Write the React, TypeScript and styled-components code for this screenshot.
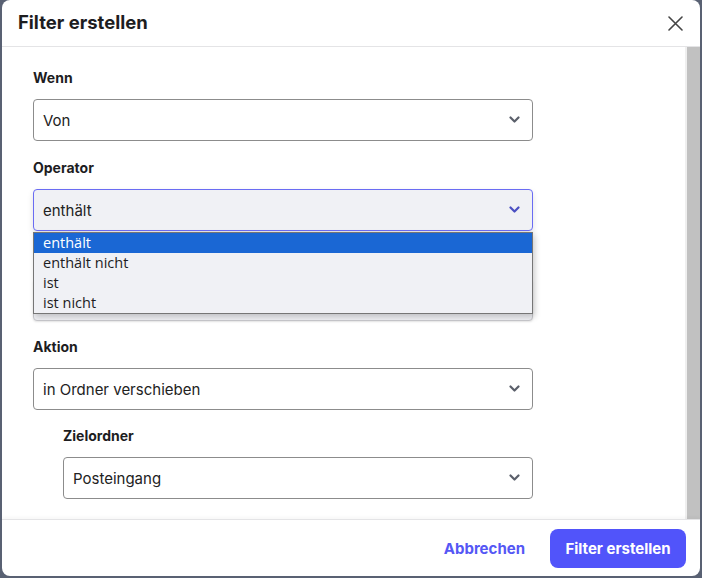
import React from "react";
import styled, { createGlobalStyle } from "styled-components";

const Global = createGlobalStyle`
  html, body { margin: 0; padding: 0; height: 100%; }
  body {
    background: #596173;
    font-family: Inter, "Noto Sans", sans-serif;
    overflow: hidden;
  }
  * { box-sizing: border-box; }
`;

const Page = styled.div`
  width: 702px;
  height: 578px;
  padding: 0 2px 2px 2px;
  display: flex;
`;

const Dialog = styled.div`
  flex: 1;
  background: #fff;
  border-radius: 8px;
  display: flex;
  flex-direction: column;
  overflow: hidden;
`;

const Header = styled.div`
  height: 47px;
  flex: none;
  display: flex;
  align-items: center;
  justify-content: space-between;
  padding: 0 14px 0 16px;
  border-bottom: 1px solid #e4e4e6;
`;

const Title = styled.h2`
  margin: 0 0 2px 0;
  font-size: 18.5px;
  font-weight: 700;
  color: #1d1d1f;
  letter-spacing: 0px;
`;

const CloseButton = styled.button`
  border: none;
  background: none;
  padding: 0;
  width: 22px;
  height: 22px;
  display: flex;
  align-items: center;
  justify-content: center;
  color: #444;
  cursor: pointer;
`;

const BodyRow = styled.div`
  flex: 1;
  display: flex;
  overflow: hidden;
`;

const Content = styled.div`
  flex: 1;
  padding: 21px 0 0 31px;
`;

const ScrollTrack = styled.div`
  width: 15px;
  flex: none;
  background: #efefef;
  padding-left: 2px;
  display: flex;
`;

const ScrollThumb = styled.div`
  flex: 1;
  background: #c1c1c1;
`;

const Field = styled.div<{ $indent?: boolean; $tight?: boolean }>`
  width: ${(p) => (p.$indent ? 470 : 500)}px;
  margin-left: ${(p) => (p.$indent ? 30 : 0)}px;
  margin-bottom: ${(p) => (p.$tight ? 16 : 17)}px;
  position: relative;
  &:last-child { margin-bottom: 0; }
`;

const Label = styled.div`
  font-size: 14px;
  font-weight: 700;
  line-height: 20px;
  height: 20px;
  color: #1d1d1f;
  margin-bottom: 11px;
`;

const SelectBox = styled.div<{ $focused?: boolean }>`
  height: 42px;
  border: 1px solid ${(p) => (p.$focused ? "#6a6cf3" : "#8c8c8c")};
  border-radius: 4px;
  background: ${(p) => (p.$focused ? "#f0f1f5" : "#fff")};
  box-shadow: ${(p) => (p.$focused ? "0 3px 6px rgba(0,0,0,0.12)" : "none")};
  display: flex;
  align-items: center;
  justify-content: space-between;
  padding: 0 12px 0 9px;
  font-size: 15px;
  color: #222;
`;

const InputBox = styled.div`
  height: 42px;
  border: 1px solid #c8c8cc;
  border-radius: 4px;
  background: #f0f1f5;
  box-shadow: 0 1px 2px rgba(0,0,0,0.1);
`;

const Chevron = styled.svg<{ $focused?: boolean }>`
  width: 11px;
  height: 8px;
  color: ${(p) => (p.$focused ? "#4a4fc2" : "#5a5f6a")};
`;

const DropList = styled.ul`
  position: absolute;
  left: 0;
  top: 74px;
  width: 500px;
  margin: 0;
  padding: 0;
  list-style: none;
  background: #f0f1f5;
  border: 1px solid #767676;
  box-shadow: 2px 3px 6px rgba(0,0,0,0.2);
  z-index: 5;
`;

const Option = styled.li<{ $selected?: boolean }>`
  height: 20px;
  line-height: 20px;
  padding-left: 9px;
  font-family: "Open Sans", "Noto Sans", sans-serif;
  font-size: 14.5px;
  color: ${(p) => (p.$selected ? "#fff" : "#1d1d1f")};
  background: ${(p) => (p.$selected ? "#1a67d4" : "transparent")};
`;

const Footer = styled.div`
  height: 57px;
  flex: none;
  border-top: 1px solid #e4e4e6;
  box-shadow: 0 -2px 3px rgba(0,0,0,0.03);
  display: flex;
  align-items: center;
  justify-content: flex-end;
  gap: 9px;
  padding: 0 14px 0 0;
`;

const TextButton = styled.button`
  border: none;
  background: none;
  font-family: Inter, "Noto Sans", sans-serif;
  font-size: 15px;
  font-weight: 700;
  color: #5557f5;
  padding: 0 16px;
  height: 39px;
  cursor: pointer;
`;

const PrimaryButton = styled.button`
  border: none;
  background: #5154fa;
  color: #fff;
  font-family: Inter, "Noto Sans", sans-serif;
  font-size: 15px;
  font-weight: 700;
  height: 39px;
  width: 136px;
  border-radius: 8px;
  cursor: pointer;
`;

const ChevronIcon = ({ focused }: { focused?: boolean }) => (
  <Chevron $focused={focused} viewBox="0 0 11 8">
    <path d="M1.5 1.5 L5.5 5.5 L9.5 1.5" fill="none" stroke="currentColor" strokeWidth="2.2" strokeLinecap="round" strokeLinejoin="round" />
  </Chevron>
);

const Select = ({ value, focused }: { value: string; focused?: boolean }) => (
  <SelectBox $focused={focused}>
    <span>{value}</span>
    <ChevronIcon focused={focused} />
  </SelectBox>
);

const options = ["enthält", "enthält nicht", "ist", "ist nicht"];

export default function App() {
  return (
    <>
      <Global />
      <Page>
        <Dialog>
          <Header>
            <Title>Filter erstellen</Title>
            <CloseButton aria-label="Schließen">
              <svg width="15" height="15" viewBox="0 0 15 15">
                <path d="M1 1 L14 14 M14 1 L1 14" stroke="currentColor" strokeWidth="1.6" strokeLinecap="round" />
              </svg>
            </CloseButton>
          </Header>
          <BodyRow>
            <Content>
              <Field>
                <Label>Wenn</Label>
                <Select value="Von" />
              </Field>
              <Field>
                <Label>Operator</Label>
                <Select value="enthält" focused />
                <DropList>
                  {options.map((o, i) => (
                    <Option key={o} $selected={i === 0}>{o}</Option>
                  ))}
                </DropList>
              </Field>
              <Field $tight>
                <Label aria-label="Wert" />
                <InputBox />
              </Field>
              <Field $tight>
                <Label>Aktion</Label>
                <Select value="in Ordner verschieben" />
              </Field>
              <Field $indent>
                <Label>Zielordner</Label>
                <Select value="Posteingang" />
              </Field>
            </Content>
            <ScrollTrack>
              <ScrollThumb />
            </ScrollTrack>
          </BodyRow>
          <Footer>
            <TextButton>Abbrechen</TextButton>
            <PrimaryButton>Filter erstellen</PrimaryButton>
          </Footer>
        </Dialog>
      </Page>
    </>
  );
}
